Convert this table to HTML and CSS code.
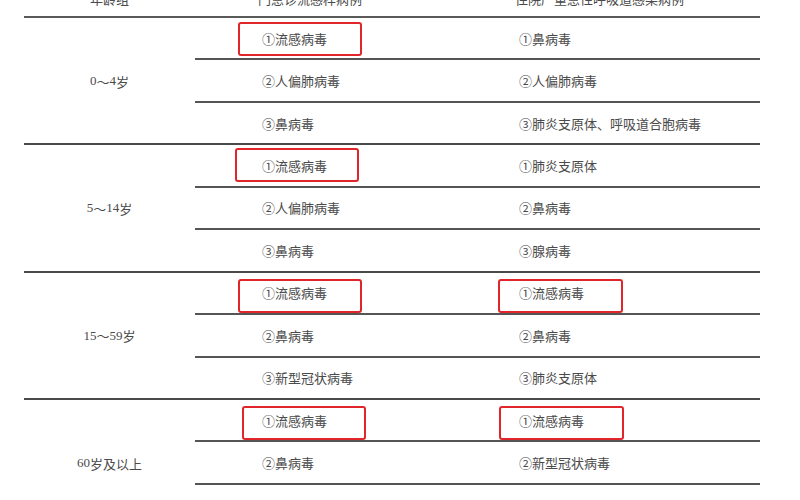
FILE: index.html
```html
<!DOCTYPE html>
<html lang="zh-CN">
<head>
<meta charset="utf-8">
<title>各年龄组病原体构成</title>
<link rel="stylesheet" href="styles.css">
</head>
<body>
<div class="sheet">
  <div class="head">
    <div class="hc age-h">年龄组</div>
    <div class="hc">门急诊流感样病例</div>
    <div class="hc">住院严重急性呼吸道感染病例</div>
  </div>

  <div class="group">
    <div class="age"><span class="num">0</span>～<span class="num">4</span>岁</div>
    <div class="rows">
      <div class="row"><div class="cell"><span class="mark m2"></span>①流感病毒</div><div class="cell">①鼻病毒</div></div>
      <div class="row"><div class="cell">②人偏肺病毒</div><div class="cell">②人偏肺病毒</div></div>
      <div class="row"><div class="cell">③鼻病毒</div><div class="cell">③肺炎支原体、呼吸道合胞病毒</div></div>
    </div>
  </div>

  <div class="group">
    <div class="age"><span class="num">5</span>～<span class="num">14</span>岁</div>
    <div class="rows">
      <div class="row"><div class="cell"><span class="mark m2 up"></span>①流感病毒</div><div class="cell">①肺炎支原体</div></div>
      <div class="row"><div class="cell">②人偏肺病毒</div><div class="cell">②鼻病毒</div></div>
      <div class="row"><div class="cell">③鼻病毒</div><div class="cell">③腺病毒</div></div>
    </div>
  </div>

  <div class="group">
    <div class="age"><span class="num">15</span>～<span class="num">59</span>岁</div>
    <div class="rows">
      <div class="row"><div class="cell"><span class="mark m2 down"></span>①流感病毒</div><div class="cell"><span class="mark m3 down"></span>①流感病毒</div></div>
      <div class="row"><div class="cell">②鼻病毒</div><div class="cell">②鼻病毒</div></div>
      <div class="row"><div class="cell">③新型冠状病毒</div><div class="cell">③肺炎支原体</div></div>
    </div>
  </div>

  <div class="group">
    <div class="age"><span class="num">60</span>岁及以上</div>
    <div class="rows">
      <div class="row"><div class="cell"><span class="mark m2 down2"></span>①流感病毒</div><div class="cell"><span class="mark m3 down2"></span>①流感病毒</div></div>
      <div class="row"><div class="cell">②鼻病毒</div><div class="cell">②新型冠状病毒</div></div>
      <div class="row"><div class="cell">③呼吸道合胞病毒</div><div class="cell">③人偏肺病毒</div></div>
    </div>
  </div>
</div>
</body>
</html>
```

FILE: styles.css
```css
html, body {
  margin: 0;
  padding: 0;
  background: #ffffff;
}

body {
  width: 800px;
  height: 500px;
  overflow: hidden;
  font-family: "Liberation Serif", "Noto Sans CJK SC", serif;
  font-size: 13px;
  color: #4a4a4a;
}

.sheet {
  margin-top: -26px;
  margin-left: 24px;
  width: 736px;
}

.head {
  display: grid;
  grid-template-columns: 171px 257px 308px;
  height: 42px;
  align-items: center;
  border-bottom: 2px solid #5a5a5a;
}

.hc {
  padding-left: 63px;
  padding-top: 6px;
  font-family: "Noto Sans CJK SC", sans-serif;
}

.hc.age-h {
  padding-left: 0;
  text-align: center;
}

.group {
  display: grid;
  grid-template-columns: 171px 565px;
  border-bottom: 2px solid #4a4a4a;
}

.age {
  display: flex;
  align-items: center;
  justify-content: center;
  font-family: "Noto Sans CJK SC", sans-serif;
  padding-top: 1px;
}

.num {
  font-family: "Liberation Serif", serif;
}

.rows {
  display: flex;
  flex-direction: column;
}

.row {
  display: grid;
  grid-template-columns: 257px 308px;
  height: 40.44px;
  border-bottom: 2px solid #555555;
}

.row:last-child {
  border-bottom: none;
}

.cell {
  position: relative;
  display: flex;
  align-items: center;
  padding-left: 67px;
  font-family: "Noto Sans CJK SC", sans-serif;
  letter-spacing: 0;
}

.mark {
  position: absolute;
  top: 4px;
  height: 30px;
  border: 2px solid #e0262a;
  border-radius: 3px;
}

.mark.m2 {
  left: 43px;
  width: 120px;
}

.mark.m3 {
  left: 46px;
  width: 121px;
}

.mark.up {
  top: 3px;
  left: 40px;
}

.mark.down {
  top: 6px;
}

.mark.down2 {
  top: 6px;
  left: 47px;
}
```
